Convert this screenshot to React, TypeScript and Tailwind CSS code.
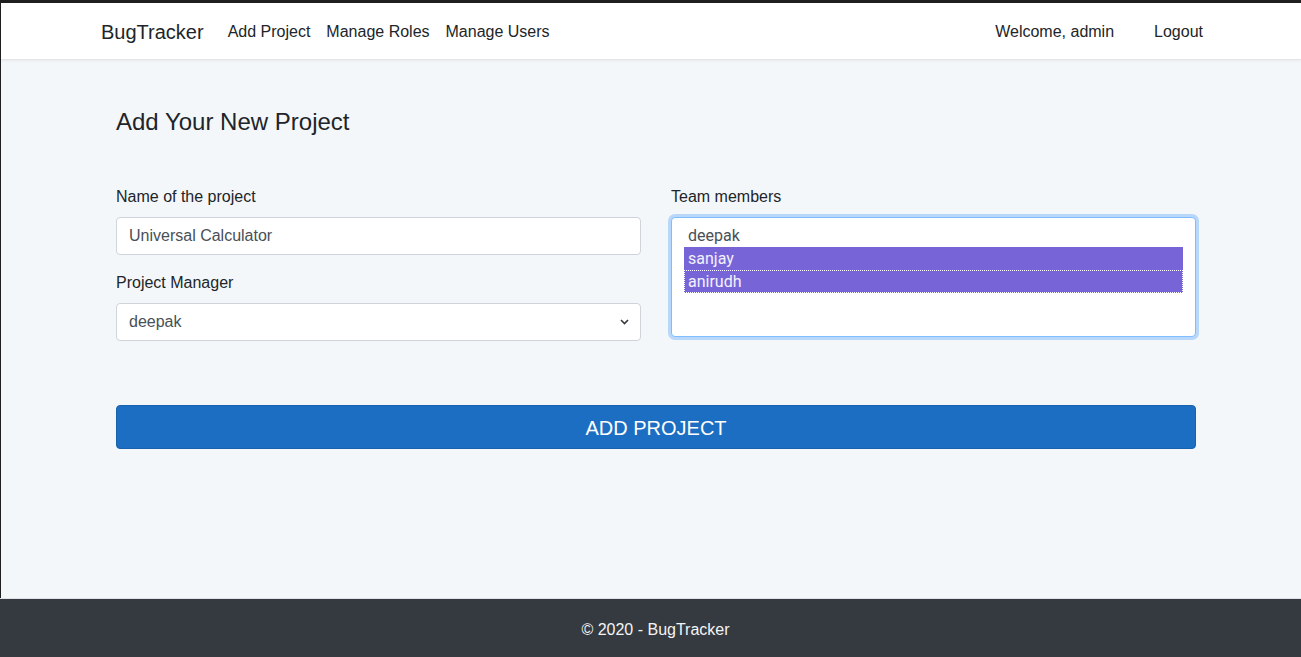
import React, { useState } from 'react';

const members = ['deepak', 'sanjay', 'anirudh'];

const NavBar: React.FC = () => (
  <nav className="h-[57px] shrink-0 border-b border-[#e5e5e5] bg-white pt-[2px] shadow-[0_1px_3px_rgba(0,0,0,0.05)]">
    <div className="mx-auto flex h-full w-[1110px] items-center pl-[5px] pr-[3px]">
      <span className="mr-4 text-[20px] text-[#212529]">BugTracker</span>
      <a className="px-2 text-base text-[#212529]">Add Project</a>
      <a className="px-2 text-base text-[#212529]">Manage Roles</a>
      <a className="px-2 text-base text-[#212529]">Manage Users</a>
      <div className="ml-auto flex items-center gap-[40px]">
        <span className="text-base text-[#212529]">Welcome, admin</span>
        <a className="text-base text-[#212529]">Logout</a>
      </div>
    </div>
  </nav>
);

const AddProjectForm: React.FC = () => {
  const [name, setName] = useState('Universal Calculator');
  const [selected] = useState<string[]>(['sanjay', 'anirudh']);

  return (
    <div className="mx-auto w-[1110px] pl-[20px] pr-[10px] pt-[47px]">
      <h3 className="text-[24px] leading-[29px] text-[#212529]">Add Your New Project</h3>

      <div className="mt-[49px] flex gap-[30px]">
        {/* Left column */}
        <div className="flex-1">
          <label className="mb-2 block text-base leading-6 text-[#212529]">Name of the project</label>
          <input
            value={name}
            onChange={(e) => setName(e.target.value)}
            className="block h-[38px] w-full rounded border border-[#ced4da] bg-white px-3 text-base text-[#495057] outline-none"
          />
          <label className="mb-2 mt-[16px] block text-base leading-6 text-[#212529]">Project Manager</label>
          <div className="relative h-[38px] w-full rounded border border-[#ced4da] bg-white">
            <span className="absolute left-3 top-1/2 -translate-y-1/2 text-base text-[#495057]">deepak</span>
            <svg
              className="absolute right-[11px] top-1/2 -translate-y-1/2"
              width="9"
              height="6"
              viewBox="0 0 9 6"
              fill="none"
            >
              <path d="M1 1l3.5 3.5L8 1" stroke="#343a40" strokeWidth="1.6" />
            </svg>
          </div>
        </div>

        {/* Right column */}
        <div className="flex-1">
          <label className="mb-2 block text-base leading-6 text-[#212529]">Team members</label>
          <div className="h-[120px] w-full rounded border border-[#80bdff] bg-white px-3 py-[6px] ring-[3px] ring-[rgba(0,123,255,0.25)]">
            {members.map((m, i) => {
              const isSel = selected.includes(m);
              return (
                <div
                  key={m}
                  className={
                    isSel
                      ? 'h-[23px] bg-[#7765d8] pl-1 text-base leading-[23px] text-[#f3f1ff]' +
                        (i === members.length - 1 ? ' outline outline-1 -outline-offset-1 outline-dotted outline-white' : '')
                      : 'h-[23px] pl-1 text-base leading-[23px] text-[#495057]'
                  }
                  style={{ fontFamily: 'Roboto, "Noto Sans", sans-serif' }}
                >
                  {m}
                </div>
              );
            })}
          </div>
        </div>
      </div>

      <button className="mt-[64px] flex h-[44px] w-full items-center justify-center rounded border border-[#1861ac] bg-[#1b6ec2] pt-[2px] text-[20px] text-white">
        ADD PROJECT
      </button>
    </div>
  );
};

export default function App() {
  return (
    <div
      className="flex h-screen flex-col bg-[#f4f7fa]"
      style={{ fontFamily: '"Liberation Sans", Arial, sans-serif' }}
    >
      <div className="h-[3px] shrink-0 bg-[#1f1f1f]" />
      <div className="flex flex-1 flex-col border-l border-[#1f1f1f]">
        <NavBar />
        <main className="flex-1">
          <AddProjectForm />
        </main>
      </div>
      <footer className="flex h-[59px] shrink-0 items-center justify-center border-t border-[#dee2e6] bg-[#353a41] pl-[10px] pt-[4px] text-base text-[#f4f4f4]">
        © 2020 - BugTracker
      </footer>
    </div>
  );
}
